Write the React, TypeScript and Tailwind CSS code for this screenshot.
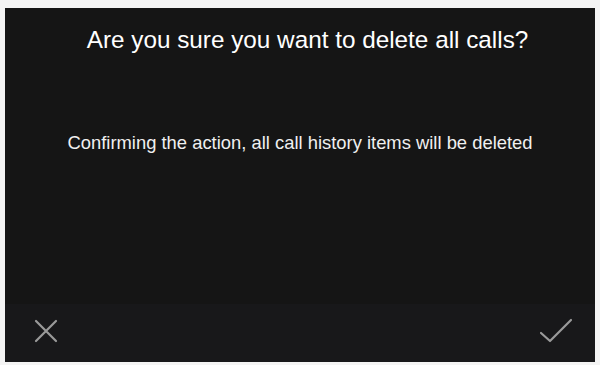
export default function App() {
  return (
    <div className="w-[600px] h-[365px] bg-[#f4f4f4] pt-[8px] pl-[5px] pr-[5px] pb-[3px]" style={{ fontFamily: '"Liberation Sans", Arial, sans-serif' }}>
      <div className="h-full w-full bg-[#151515] flex flex-col">
        <div className="h-[64px] flex items-center justify-center pl-[15px] text-[24.3px] text-white">
          Are you sure you want to delete all calls?
        </div>
        <div className="h-[60px]" />
        <div className="h-[22px] flex items-center justify-center text-[18.4px] text-[#f0f0f0]">
          Confirming the action, all call history items will be deleted
        </div>
        <div className="flex-1" />
        <div className="h-[58px] bg-[#18181a] flex items-center justify-between pl-[28px] pr-[22px] pb-[4px]">
          <svg width="26" height="26" viewBox="0 0 26 26" fill="none" stroke="#9a9a9a" strokeWidth="2.2" strokeLinecap="round">
            <path d="M3 3 L23 23 M23 3 L3 23" />
          </svg>
          <svg width="34" height="26" viewBox="0 0 34 26" fill="none" stroke="#9a9a9a" strokeWidth="2.2" strokeLinecap="round" strokeLinejoin="round">
            <path d="M2 15 L11 23 L32 2" />
          </svg>
        </div>
      </div>
    </div>
  );
}
